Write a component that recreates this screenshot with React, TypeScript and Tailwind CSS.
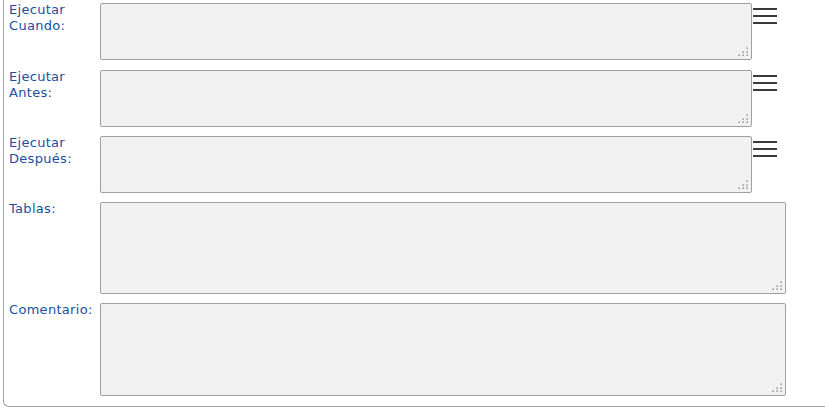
const font = { fontFamily: '"DejaVu Sans", Verdana, sans-serif' }

type Row = { label: string[]; height: string; wide: boolean; menu: boolean; extra: string }

const rows: Row[] = [
  { label: ["Ejecutar", "Cuando:"], height: "h-[57px]", wide: false, menu: true, extra: "mb-[1px]" },
  { label: ["Ejecutar", "Antes:"], height: "h-[57px]", wide: false, menu: true, extra: "" },
  { label: ["Ejecutar", "Después:"], height: "h-[57px]", wide: false, menu: true, extra: "" },
  { label: ["Tablas:"], height: "h-[92px]", wide: true, menu: false, extra: "" },
  { label: ["Comentario:"], height: "h-[93px]", wide: true, menu: false, extra: "" },
]

function Grip() {
  // dotted resize handle in the bottom-right corner
  const dots = [
    [8, 0],
    [8, 4],
    [4, 4],
    [8, 7],
    [4, 7],
    [0, 7],
  ]
  return (
    <svg className="absolute right-[4px] bottom-[4px] pointer-events-none" width="10" height="9" viewBox="0 0 10 9">
      {dots.map(([x, y]) => (
        <g key={`${x}-${y}`}>
          <rect x={x} y={y} width="2" height="2" fill="#c4c4c4" />
          <rect x={x + 1} y={y + 1} width="1" height="1" fill="#9a9a9a" />
        </g>
      ))}
    </svg>
  )
}

function MenuIcon() {
  return (
    <div className="flex flex-col gap-[5px] w-[24px] mt-[5px] ml-[1px]">
      <span className="block h-[2px] bg-[#3a3a3a]" />
      <span className="block h-[2px] bg-[#3a3a3a]" />
      <span className="block h-[2px] bg-[#3a3a3a]" />
    </div>
  )
}

export default function App() {
  return (
    <div className="w-[825px] h-[408px] bg-white overflow-hidden" style={font}>
      <div className="ml-[3px] w-[840px] h-[407px] border-l border-b border-[#a3a3a3] rounded-bl-[6px] pt-[3px] flex flex-col gap-[9px]">
        {rows.map((row) => (
          <div key={row.label.join(" ")} className={`flex items-start ${row.extra}`}>
            <div className="w-[96px] pl-[5px] -mt-[1px] text-[13px] leading-[16px] text-[#1c4ea0] tracking-[0.3px]">
              {row.label.map((l) => (
                <div key={l}>{l}</div>
              ))}
            </div>
            <div className={`relative ${row.wide ? "w-[686px]" : "w-[652px]"} ${row.height}`}>
              <textarea className="w-full h-full resize-none bg-[#f1f1f1] border border-[#a0a0a0] rounded-[2px] outline-none block" />
              <Grip />
            </div>
            {row.menu && <MenuIcon />}
          </div>
        ))}
      </div>
    </div>
  )
}
